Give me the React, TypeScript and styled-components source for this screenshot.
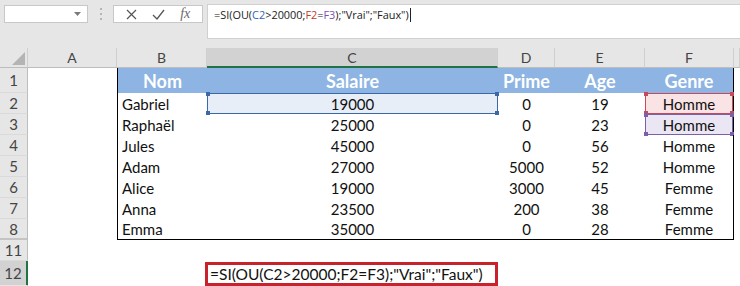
import React from "react";
import styled, { createGlobalStyle, css } from "styled-components";

const Global = createGlobalStyle`
  html, body { margin: 0; padding: 0; background: #ffffff; overflow: hidden; }
  * { box-sizing: border-box; }
`;

const COLS = "28px 89px 90px 291px 57px 90px 89px 1fr";
const CELL_FONT = `"Lato", "Open Sans", sans-serif`;
const UI_FONT = `"Open Sans", "Noto Sans", sans-serif`;

const Page = styled.div`
  width: 740px;
  height: 286px;
  display: flex;
  flex-direction: column;
  background: #e6e6e6;
`;

const Toolbar = styled.div`
  height: 48px;
  display: flex;
  align-items: flex-start;
  padding: 5px 0 0 4px;
  background: #e6e6e6;
`;

const NameBox = styled.div`
  width: 84px;
  height: 18px;
  background: #fff;
  border: 1px solid #c8c8c8;
  display: flex;
  align-items: center;
  justify-content: flex-end;
  padding-right: 6px;
`;

const Grip = styled.div`
  width: 25px;
  height: 18px;
  display: flex;
  flex-direction: column;
  align-items: center;
  justify-content: center;
  gap: 3px;
  span {
    width: 2px;
    height: 2px;
    background: #b5b5b5;
  }
`;

const FxGroup = styled.div`
  width: 90px;
  height: 18px;
  background: #fff;
  border: 1px solid #c8c8c8;
  display: flex;
  align-items: center;
  justify-content: space-around;
  padding: 0 4px;
`;

const FxText = styled.span`
  font-family: "Liberation Serif", serif;
  font-style: italic;
  font-size: 14px;
  color: #6a6a6a;
  line-height: 1;
`;

const FormulaInput = styled.div`
  flex: 1;
  margin-left: 4px;
  margin-top: -1px;
  height: 35px;
  background: #fff;
  border: 1px solid #d0d0d0;
  border-right: none;
  padding: 2px 0 0 6px;
  font-family: ${UI_FONT};
  font-size: 10.9px;
  color: #222;
  white-space: nowrap;
  line-height: 16px;
`;

const Ref = styled.span<{ $c: string }>`
  color: ${(p) => p.$c};
`;

const Caret = styled.span`
  display: inline-block;
  width: 1px;
  height: 14px;
  background: #222;
  vertical-align: -3px;
  margin-left: 1px;
`;

const Sheet = styled.div`
  flex: 1;
  display: flex;
  flex-direction: column;
  background: #fff;
  overflow: hidden;
`;

const Row = styled.div<{ $h: number }>`
  display: grid;
  grid-template-columns: ${COLS};
  height: ${(p) => p.$h}px;
  flex-shrink: 0;
`;

const HeadBase = css`
  background: #e6e6e6;
  color: #444;
  font-family: ${CELL_FONT};
  display: flex;
  align-items: center;
  justify-content: center;
`;

const ColHead = styled.div<{ $active?: boolean }>`
  ${HeadBase};
  font-size: 14px;
  border-right: 1px solid #cfcfcf;
  border-bottom: 1px solid #bdbdbd;
  ${(p) =>
    p.$active &&
    css`
      background: #d2d2d2;
      border-bottom: 2px solid #217346;
    `}
`;

const CornerHead = styled.div`
  ${HeadBase};
  border-right: 1px solid #cfcfcf;
  border-bottom: 1px solid #bdbdbd;
  align-items: flex-end;
  justify-content: flex-end;
  padding: 0 2px 2px 0;
`;

const RowHead = styled.div<{ $active?: boolean; $gap?: boolean }>`
  ${HeadBase};
  font-size: 15px;
  border-right: 1px solid #bdbdbd;
  border-bottom: 1px solid #dadada;
  ${(p) => p.$gap && "border-bottom: 2px solid #c4c4c4;"}
  ${(p) =>
    p.$active &&
    css`
      background: #d2d2d2;
      border-right: 2px solid #217346;
    `}
`;

type Hl = "blue" | "red" | "purple";
const HL: Record<Hl, { bg: string; bd: string }> = {
  blue: { bg: "#e7eef8", bd: "#3a68a8" },
  red: { bg: "#f9e3e5", bd: "#c54a5a" },
  purple: { bg: "#ebe6f4", bd: "#7d5fa8" },
};

const Cell = styled.div<{
  $align?: "left" | "center";
  $head?: boolean;
  $bl?: boolean;
  $br?: boolean;
  $bb?: boolean;
  $hl?: Hl;
}>`
  position: relative;
  display: flex;
  align-items: center;
  justify-content: ${(p) => (p.$align === "left" ? "flex-start" : "center")};
  padding: 0 4px;
  font-family: ${CELL_FONT};
  font-size: ${(p) => (p.$head ? "18px" : "15px")};
  font-weight: ${(p) => (p.$head ? 700 : 400)};
  color: ${(p) => (p.$head ? "#ffffff" : "#111")};
  background: ${(p) => (p.$head ? "#8db4e2" : p.$hl ? HL[p.$hl].bg : "transparent")};
  white-space: nowrap;
  ${(p) => p.$bl && "border-left: 1px solid #000;"}
  ${(p) => p.$br && "border-right: 1px solid #000;"}
  ${(p) => p.$bb && "border-bottom: 1px solid #000;"}
  ${(p) =>
    p.$hl &&
    css`
      box-shadow: inset 0 0 0 1px ${HL[p.$hl].bd};
    `}
`;

const FormulaCell = styled.div`
  display: flex;
  align-items: stretch;
`;

const Handle = styled.span<{ $c: string; $top: boolean; $left: boolean }>`
  position: absolute;
  width: 4px;
  height: 4px;
  background: ${(p) => p.$c};
  ${(p) => (p.$top ? "top: -1px;" : "bottom: -1px;")}
  ${(p) => (p.$left ? "left: -1px;" : "right: -1px;")}
`;

const RedBox = styled.div`
  flex: 1;
  margin: 1px 0 0 -2px;
  border: 3px solid #c8232c;
  display: flex;
  align-items: center;
  padding-left: 2px;
  font-family: ${CELL_FONT};
  font-size: 15.5px;
  color: #111;
  white-space: nowrap;
`;

const Handles = ({ c }: { c: string }) => (
  <>
    <Handle $c={c} $top $left />
    <Handle $c={c} $top $left={false} />
    <Handle $c={c} $top={false} $left />
    <Handle $c={c} $top={false} $left={false} />
  </>
);

const data: [string, string, string, string, string][] = [
  ["Gabriel", "19000", "0", "19", "Homme"],
  ["Raphaël", "25000", "0", "23", "Homme"],
  ["Jules", "45000", "0", "56", "Homme"],
  ["Adam", "27000", "5000", "52", "Homme"],
  ["Alice", "19000", "3000", "45", "Femme"],
  ["Anna", "23500", "200", "38", "Femme"],
  ["Emma", "35000", "0", "28", "Femme"],
];

const FORMULA = (
  <>
    =SI(OU(<Ref $c="#2f63c4">C2</Ref>&gt;20000;<Ref $c="#c0392b">F2</Ref>=
    <Ref $c="#7b4fb8">F3</Ref>);"Vrai";"Faux")
  </>
);

const EmptyCells = ({ n }: { n: number }) => (
  <>
    {Array.from({ length: n }, (_, i) => (
      <Cell key={i} />
    ))}
  </>
);

export default function App() {
  return (
    <Page>
      <Global />
      <Toolbar>
        <NameBox>
          <svg width="7" height="4" viewBox="0 0 7 4">
            <path d="M0 0h7L3.5 4z" fill="#7a7a7a" />
          </svg>
        </NameBox>
        <Grip>
          <span />
          <span />
          <span />
        </Grip>
        <FxGroup>
          <svg width="11" height="11" viewBox="0 0 11 11">
            <path d="M1 1l9 9M10 1l-9 9" stroke="#555" strokeWidth="1.2" />
          </svg>
          <svg width="13" height="11" viewBox="0 0 13 11">
            <path d="M1 6l4 4 7-9" stroke="#555" strokeWidth="1.3" fill="none" />
          </svg>
          <FxText>fx</FxText>
        </FxGroup>
        <FormulaInput>
          {FORMULA}
          <Caret />
        </FormulaInput>
      </Toolbar>
      <Sheet>
        <Row $h={20}>
          <CornerHead>
            <svg width="13" height="13" viewBox="0 0 13 13">
              <path d="M13 0v13H0z" fill="#b4b4b4" />
            </svg>
          </CornerHead>
          <ColHead>A</ColHead>
          <ColHead>B</ColHead>
          <ColHead $active>C</ColHead>
          <ColHead>D</ColHead>
          <ColHead>E</ColHead>
          <ColHead>F</ColHead>
          <ColHead />
        </Row>
        <Row $h={25}>
          <RowHead>1</RowHead>
          <Cell />
          <Cell $head $bl>Nom</Cell>
          <Cell $head>Salaire</Cell>
          <Cell $head>Prime</Cell>
          <Cell $head>Age</Cell>
          <Cell $head $br>Genre</Cell>
          <Cell />
        </Row>
        {data.map((r, i) => {
          const n = i + 2;
          const last = i === data.length - 1;
          return (
            <Row $h={21} key={n}>
              <RowHead $gap={last}>{n}</RowHead>
              <Cell />
              <Cell $align="left" $bl $bb={last}>
                {r[0]}
              </Cell>
              <Cell $bb={last} $hl={n === 2 ? "blue" : undefined}>
                {r[1]}
                {n === 2 && <Handles c={HL.blue.bd} />}
              </Cell>
              <Cell $bb={last}>{r[2]}</Cell>
              <Cell $bb={last}>{r[3]}</Cell>
              <Cell
                $br
                $bb={last}
                $hl={n === 2 ? "red" : n === 3 ? "purple" : undefined}
              >
                {r[4]}
                {n === 2 && <Handles c={HL.red.bd} />}
                {n === 3 && <Handles c={HL.purple.bd} />}
              </Cell>
              <Cell />
            </Row>
          );
        })}
        <Row $h={21}>
          <RowHead>11</RowHead>
          <EmptyCells n={7} />
        </Row>
        <Row $h={24}>
          <RowHead $active>12</RowHead>
          <Cell />
          <Cell />
          <FormulaCell>
            <RedBox>=SI(OU(C2&gt;20000;F2=F3);"Vrai";"Faux")</RedBox>
          </FormulaCell>
          <EmptyCells n={4} />
        </Row>
        <Row $h={21}>
          <RowHead />
          <EmptyCells n={7} />
        </Row>
      </Sheet>
    </Page>
  );
}
